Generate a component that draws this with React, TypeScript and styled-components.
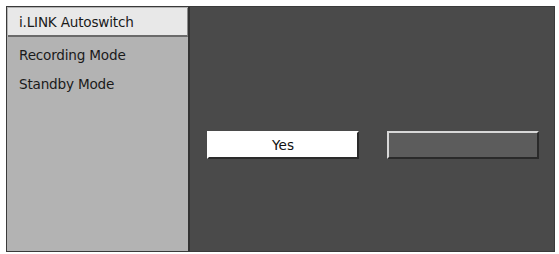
import React from "react";
import styled, { createGlobalStyle } from "styled-components";

const GlobalStyle = createGlobalStyle`
  html, body {
    margin: 0;
    padding: 0;
    background: #ffffff;
  }
  body {
    font-family: "Liberation Sans", Arial, sans-serif;
  }
`;

const Page = styled.div`
  width: 559px;
  height: 254px;
  padding: 6px 4px 2px 6px;
  box-sizing: border-box;
`;

const Frame = styled.div`
  display: flex;
  height: 100%;
  border: 1px solid #3a3a3a;
  box-sizing: border-box;
  background: #4a4a4a;
`;

const Sidebar = styled.div`
  width: 183px;
  background: #b3b3b3;
  border-right: 2px solid #333333;
  padding: 1px 0 0 1px;
  display: flex;
  flex-direction: column;
`;

const MenuItem = styled.div<{ $active?: boolean }>`
  height: 29px;
  box-sizing: border-box;
  display: flex;
  align-items: center;
  padding-left: 11px;
  margin-bottom: ${(p) => (p.$active ? "4px" : "0")};
  font-family: "DejaVu Sans", "Liberation Sans", sans-serif;
  font-size: 13.6px;
  letter-spacing: -0.2px;
  color: #1a1a1a;
  background: ${(p) => (p.$active ? "#e8e8e8" : "transparent")};
  border-bottom: ${(p) => (p.$active ? "2px solid #6a6a6a" : "2px solid transparent")};
  border-right: ${(p) => (p.$active ? "1px solid #8a8a8a" : "1px solid transparent")};
`;

const Content = styled.div`
  flex: 1;
  display: flex;
  align-items: flex-start;
  gap: 28px;
  padding: 124px 15px 0 17px;
`;

const Button = styled.div<{ $variant: "light" | "dark" }>`
  width: 152px;
  height: 28px;
  box-sizing: border-box;
  display: flex;
  align-items: center;
  justify-content: center;
  font-family: "DejaVu Sans", "Liberation Sans", sans-serif;
  font-size: 13.6px;
  color: #111111;
  background: ${(p) => (p.$variant === "light" ? "#ffffff" : "#5c5c5c")};
  border-top: 2px solid ${(p) => (p.$variant === "light" ? "#ffffff" : "#d8d8d8")};
  border-left: 2px solid ${(p) => (p.$variant === "light" ? "#ffffff" : "#d8d8d8")};
  border-bottom: 2px solid #2a2a2a;
  border-right: 2px solid #2a2a2a;
`;

export default function App() {
  return (
    <>
      <GlobalStyle />
      <Page>
        <Frame>
          <Sidebar>
            <MenuItem $active>i.LINK Autoswitch</MenuItem>
            <MenuItem>Recording Mode</MenuItem>
            <MenuItem>Standby Mode</MenuItem>
          </Sidebar>
          <Content>
            <Button $variant="light">Yes</Button>
            <Button $variant="dark" />
          </Content>
        </Frame>
      </Page>
    </>
  );
}
